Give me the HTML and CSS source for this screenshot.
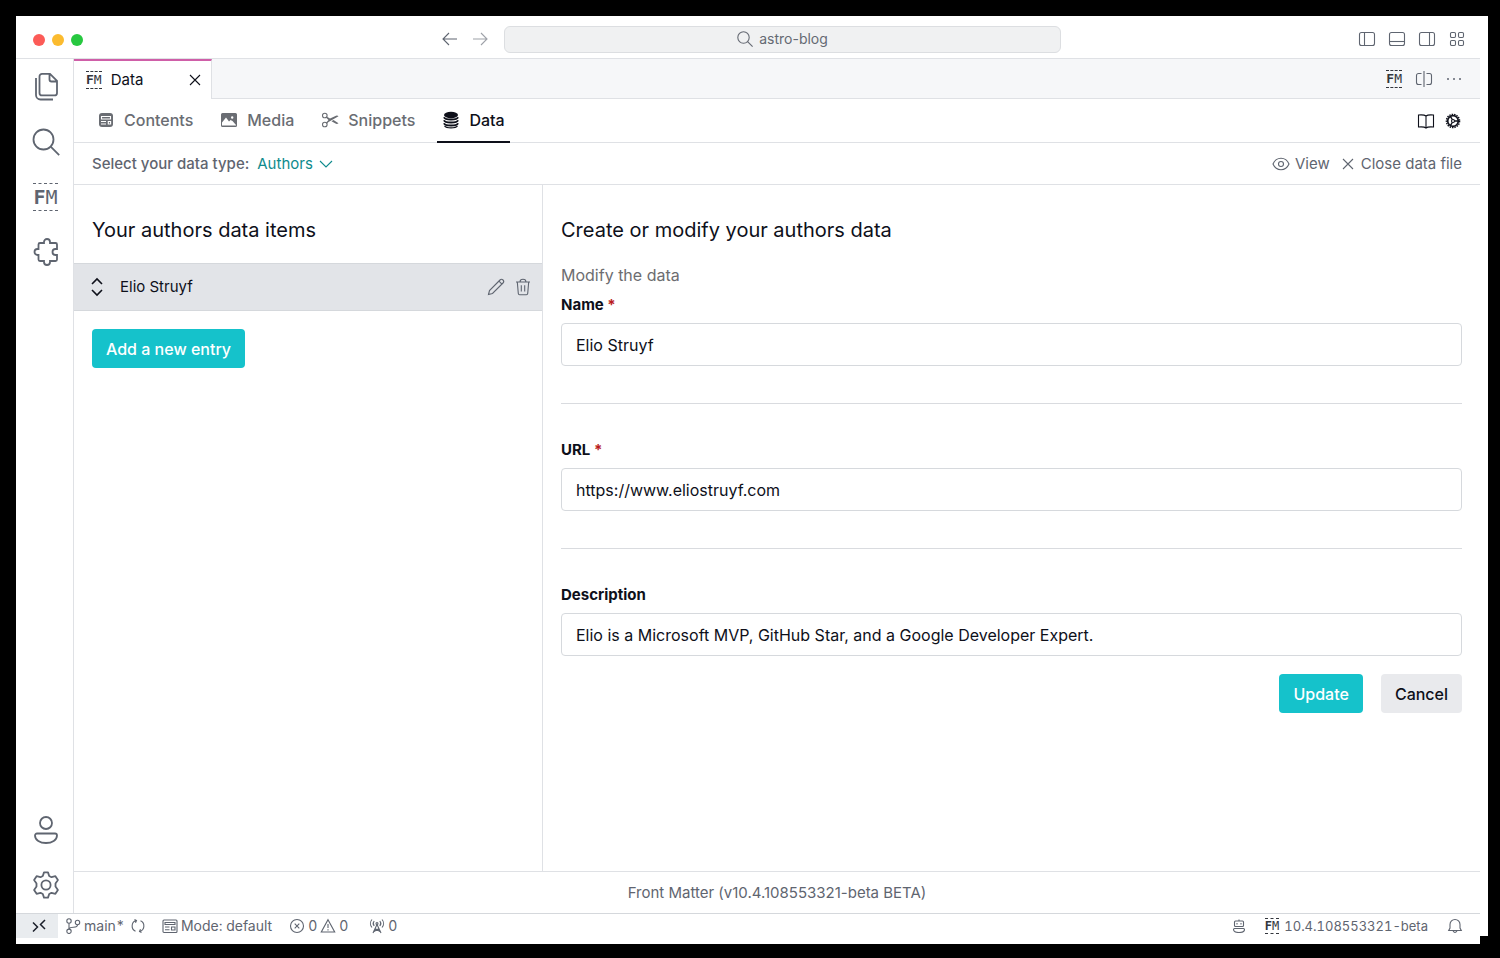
FILE: index.html
```html
<!DOCTYPE html>
<html lang="en">
<head>
<meta charset="utf-8">
<title>astro-blog</title>
<link rel="stylesheet" href="styles.css">
</head>
<body>
<svg class="sprite" aria-hidden="true">
  <symbol id="close" viewBox="0 0 16 16"><path d="M3 3l10 10M13 3L3 13"/></symbol>
  <symbol id="search" viewBox="0 0 16 16"><circle cx="6.5" cy="6.5" r="5.7"/><path d="M10.6 10.6l5 5"/></symbol>
  <symbol id="gear" viewBox="0 0 28 28">
    <circle cx="14" cy="14" r="4.6"/>
    <path stroke-linejoin="round" d="M12 1.400h4l1.200 3.600 2.300 1.200 3.900-1 2.500 3.900-2.400 3.400v3l2.400 3.400-2.500 3.900-3.900-1-2.300 1.200-1.200 3.600h-4l-1.200-3.600-2.300-1.200-3.900 1-2.500-3.900 2.400-3.400v-3L2.100 9.100l2.500-3.900 3.900 1 2.300-1.200z"/>
  </symbol>
</svg>

<div class="window">
  <header class="titlebar">
    <div class="lights"><span class="light red"></span><span class="light amber"></span><span class="light green"></span></div>
    <div class="command">
      <button class="icon-btn" aria-label="Back"><svg class="i16" viewBox="0 0 16 16"><path d="M15 8H1.500M7 2L1 8l6 6"/></svg></button>
      <button class="icon-btn faded" aria-label="Forward"><svg class="i16" viewBox="0 0 16 16"><path d="M1 8h13.500M9 2l6 6-6 6"/></svg></button>
      <button class="omnibox"><svg class="i16"><use href="#search"/></svg>astro-blog</button>
    </div>
    <div class="layouts">
      <button class="icon-btn" aria-label="Toggle primary side bar"><svg class="i18" viewBox="0 0 18 18"><rect x="1.500" y="2.500" width="15" height="13" rx="2"/><path d="M6.500 2.500v13"/></svg></button>
      <button class="icon-btn" aria-label="Toggle panel"><svg class="i18" viewBox="0 0 18 18"><rect x="1.500" y="2.500" width="15" height="13" rx="2"/><path d="M1.500 11.500h15"/></svg></button>
      <button class="icon-btn" aria-label="Toggle secondary side bar"><svg class="i18" viewBox="0 0 18 18"><rect x="1.500" y="2.500" width="15" height="13" rx="2"/><path d="M11.500 2.500v13"/></svg></button>
      <button class="icon-btn" aria-label="Customize layout"><svg class="i18" viewBox="0 0 18 18"><rect x="2.500" y="2.500" width="5" height="5" rx="1.200"/><rect x="10.500" y="2.500" width="5" height="5" rx="1.200"/><rect x="2.500" y="10.500" width="5" height="5" rx="1.200"/><rect x="10.500" y="10.500" width="5" height="5" rx="1.200"/></svg></button>
    </div>
  </header>

  <div class="workbench">
    <nav class="activity" aria-label="Activity bar">
      <button class="icon-btn" aria-label="Explorer"><svg class="i28" viewBox="-2 0 28 28"><path d="M8 .900h8l7 7v12a2.500 2.500 0 0 1-2.500 2.500H8a2.500 2.500 0 0 1-2.500-2.500V3.400A2.500 2.500 0 0 1 8 .900zM15.500 1v5.500a2 2 0 0 0 2 2H23M2 5v17a4.500 4.500 0 0 0 4.500 4.500H19"/></svg></button>
      <button class="icon-btn" aria-label="Search"><svg class="i28" viewBox="0 0 28 28"><circle cx="11.500" cy="11.500" r="10"/><path d="M18.700 18.700l8.500 8.500"/></svg></button>
      <button class="icon-btn" aria-label="Front Matter"><span class="fm fm-lg"><b>F</b>M</span></button>
      <button class="icon-btn" aria-label="Extensions"><svg class="i28" viewBox="-1 0 28 28"><path d="M7 5h4V4a3 3 0 0 1 6 0v1h5.500A1.500 1.500 0 0 1 24 6.500V11h-1.500a3 3 0 0 0 0 6H24v4.500a1.500 1.500 0 0 1-1.500 1.500H17v1a3 3 0 0 1-6 0v-1H7a1.500 1.500 0 0 1-1.500-1.500V17h-1a3 3 0 0 1 0-6h1V6.500A1.500 1.500 0 0 1 7 5z"/></svg></button>
      <button class="icon-btn account" aria-label="Accounts"><svg class="i28" viewBox="0 0 28 28"><circle cx="14" cy="7" r="6"/><path d="M5 17.500h18a2 2 0 0 1 2 2c0 4.500-5 7.500-11 7.500s-11-3-11-7.500a2 2 0 0 1 2-2z"/></svg></button>
      <button class="icon-btn" aria-label="Manage"><svg class="i28"><use href="#gear"/></svg></button>
    </nav>

    <div class="editor">
      <div class="tabs">
        <div class="tab"><span class="fm fm-sm"><b>F</b>M</span><span class="tab-title">Data</span><button class="icon-btn dark" aria-label="Close tab"><svg class="i16"><use href="#close"/></svg></button></div>
        <div class="tab-actions">
          <button class="icon-btn" aria-label="Open Front Matter"><span class="fm fm-sm"><b>F</b>M</span></button>
          <button class="icon-btn" aria-label="Split editor"><svg class="i18" viewBox="0 0 18 18"><path d="M9 1v16M6.500 3.500H3.500a2 2 0 0 0-2 2v7a2 2 0 0 0 2 2h3M11.500 3.500h3a2 2 0 0 1 2 2v7a2 2 0 0 1-2 2h-3"/></svg></button>
          <button class="icon-btn" aria-label="More actions"><svg class="i16 solid" viewBox="0 0 16 16"><circle cx="2" cy="8" r="1"/><circle cx="8" cy="8" r="1"/><circle cx="14" cy="8" r="1"/></svg></button>
        </div>
      </div>

      <div class="sections">
        <nav class="section-links">
          <a class="section" href="#contents"><svg class="i18" viewBox="-1 -1 18 18"><rect class="fill" x="1" y="1" width="14" height="14" rx="3"/><path class="knock" d="M3.500 4.500h9v2.500h-9zM3 9.500h5M3 12h5M10.300 9.500h2.300v2.500h-2.300z"/></svg>Contents</a>
          <a class="section" href="#media"><svg class="i18" viewBox="0 0 18 18"><path class="fill" d="M2.500 2h13A1.500 1.500 0 0 1 17 3.500v11a1.500 1.500 0 0 1-1.500 1.500h-13A1.500 1.500 0 0 1 1 14.500v-11A1.500 1.500 0 0 1 2.500 2z"/><path class="white" d="M2 14.500v-3L6 6.500l3 4 1.500-1.500 2 1 3.500 4v.500zM11 6.500a1.200 1.200 0 1 0 2.400 0 1.200 1.200 0 1 0-2.400 0z"/></svg>Media</a>
          <a class="section" href="#snippets"><svg class="i18" viewBox="0 0 18 18"><circle cx="3.800" cy="4.500" r="2.300"/><circle cx="3.800" cy="13.500" r="2.300"/><path class="fill" d="M5.500 5.500l3.500 2 6-2.800q1.500-.500 2.500.500L7.500 11l-1.700 1.800-.8-1L7.500 9 5 6.600zM10.500 10.300l2-1.200 5 3.200q-1.500 1-3 .300z"/></svg>Snippets</a>
          <a class="section active" href="#data"><svg class="i18" viewBox="0 0 18 18"><ellipse class="fill" cx="9" cy="4" rx="7" ry="3.200"/><path d="M2 6.300c1 3 13 3 14 0M2 9.300c1 3 13 3 14 0M2 12.300c1 3 13 3 14 0" stroke-width="1.900"/><path d="M2.500 14.800c2 2.700 11 2.700 13 0"/></svg>Data</a>
        </nav>
        <div class="section-tools">
          <button class="icon-btn dark" aria-label="Documentation"><svg class="i18" viewBox="0 0 18 18"><path d="M9 4c-1.500-1.300-4-1.300-7.500-1v12c3.500-.300 6-.300 7.500 1 1.500-1.300 4-1.300 7.500-1V3c-3.500-.300-6-.300-7.500 1zM9 4v12"/></svg></button>
          <button class="icon-btn dark" aria-label="Settings"><svg class="i18" viewBox="0 0 18 18"><circle cx="9" cy="9" r="6.600" stroke-width="1.400" stroke-dasharray="1.500 .960"/><circle cx="9" cy="9" r="5.300" stroke-width="1.700"/><circle cx="9" cy="9" r="1.500"/><path d="M10.500 9H14M8.300 7.500L6.500 4.600M8.300 10.500l-1.800 2.900" stroke-width="1.400"/></svg></button>
        </div>
      </div>

      <div class="toolbar">
        <label class="toolbar-label" for="data-type">Select your data type:</label>
        <select class="type-select" id="data-type"><option>Authors</option></select>
        <svg class="i14 teal" viewBox="0 0 14 14"><path d="M1 4l6 6 6-6"/></svg>
        <div class="toolbar-actions">
          <button class="text-btn"><svg class="i18" viewBox="0 0 18 18"><path d="M1 9c1.500-3.500 4.500-5.700 8-5.700s6.500 2.200 8 5.700c-1.500 3.500-4.500 5.700-8 5.700S2.500 12.500 1 9z"/><circle cx="9" cy="9" r="2.500"/></svg>View</button>
          <button class="text-btn"><svg class="i16"><use href="#close"/></svg>Close data file</button>
        </div>
      </div>

      <div class="panes">
        <aside class="items">
          <h2 class="heading">Your authors data items</h2>
          <ul class="list">
            <li class="item">
              <svg class="grip" viewBox="0 0 16 20"><path d="M3 7l5-5 5 5M3 13l5 5 5-5"/></svg>
              <span class="item-name">Elio Struyf</span>
              <button class="icon-btn" aria-label="Edit"><svg class="i18" viewBox="0 0 18 18"><path d="M1.500 16.500l1-4L13 2a1.900 1.900 0 0 1 3 3L5.500 15.500zM12 3.200l2.900 2.900"/></svg></button>
              <button class="icon-btn" aria-label="Delete"><svg class="i18" viewBox="0 0 18 18"><path d="M2 4h14M3.300 4l1 11.500a1.300 1.300 0 0 0 1.300 1.200h6.800a1.300 1.300 0 0 0 1.300-1.200l1-11.500M6 4q0-2.800 3-2.800T12 4M7.300 7.200v6.200M10.700 7.200v6.200"/></svg></button>
            </li>
          </ul>
          <button class="btn primary">Add a new entry</button>
        </aside>
        <main class="detail">
          <h2 class="heading">Create or modify your authors data</h2>
          <p class="hint">Modify the data</p>
          <form class="form">
            <div class="field"><label for="name">Name <span class="req">*</span></label><input id="name" type="text" value="Elio Struyf"></div>
            <hr>
            <div class="field"><label for="url">URL <span class="req">*</span></label><input id="url" type="text" value="https://www.eliostruyf.com"></div>
            <hr>
            <div class="field"><label for="description">Description</label><input id="description" type="text" value="Elio is a Microsoft MVP, GitHub Star, and a Google Developer Expert."></div>
            <div class="form-actions"><button type="button" class="btn primary">Update</button><button type="button" class="btn secondary">Cancel</button></div>
          </form>
        </main>
      </div>
      <footer class="version">Front Matter (v10.4.108553321-beta BETA)</footer>
    </div>
  </div>

  <footer class="statusbar">
    <button class="remote" aria-label="Remote"><svg class="i16" viewBox="0 0 16 16"><path d="M2 4.500L6.500 9 2 13.500M14 2L9.500 6.500 14 11"/></svg></button>
    <button class="status"><svg class="i16" viewBox="0 0 16 16"><circle cx="4" cy="3" r="2.200"/><circle cx="12.500" cy="4.500" r="2.200"/><circle cx="4" cy="13.300" r="2.200"/><path d="M4 5.200v5.900M12.500 6.700c0 2.300-1.500 2.500-4 2.500S4.500 9.800 4 11"/></svg>main*</button>
    <button class="status sync" aria-label="Synchronize"><svg class="i16" viewBox="0 0 16 16"><path d="M5.500 13.200A5.700 5.700 0 0 1 6 2.600M10.500 2.800A5.700 5.700 0 0 1 10 13.400M4.500 1.500l2 1-1 2.300M11.500 14.500l-2-1 1-2.300"/></svg></button>
    <button class="status mode"><svg class="i16" viewBox="0 0 16 16"><rect x="1" y="2" width="14" height="12.500" rx="1"/><path d="M3 4.500h10v2H3zM3 9h4.500M3 11.800h4.500M9.500 9H13v3H9.500z"/></svg>Mode: default</button>
    <button class="status problems"><svg class="i16" viewBox="0 0 16 16"><circle cx="8" cy="8" r="6.500"/><path d="M5.700 5.700l4.600 4.600M10.300 5.700l-4.600 4.600"/></svg>0<svg class="i16" viewBox="0 0 16 16"><path d="M8 1.700L14.700 14H1.300zM8 6v4M8 11.300v1.200"/></svg>0</button>
    <button class="status ports"><svg class="i16" viewBox="0 0 16 16"><path d="M8 6.500L4 15M8 6.500L12 15M5.700 11.500h4.600M5 13.500l5-3M11 13.500l-5-3M3 1.500a6 6 0 0 0 0 8M13 1.500a6 6 0 0 1 0 8M5.200 3a3.800 3.800 0 0 0 0 5M10.800 3a3.800 3.800 0 0 1 0 5"/><circle cx="8" cy="5.500" r="1"/></svg>0</button>
    <div class="status-right">
      <button class="status" aria-label="Copilot"><svg class="i14" viewBox="0 0 14 14"><rect x="2.500" y="2" width="9" height="5.500" rx="1"/><path d="M7 .500V2M5 4v1.500M9 4v1.500M2.500 9.500h9a1 1 0 0 1 1 1c0 2-2 3-5.500 3s-5.500-1-5.500-3a1 1 0 0 1 1-1z"/></svg></button>
      <button class="status release"><span class="fm fm-xs"><b>F</b>M</span>10.4.108553321-beta</button>
      <button class="status" aria-label="Notifications"><svg class="i16" viewBox="0 0 16 16"><path d="M8 1.500a5 5 0 0 0-5 5V10l-1.300 2.500h12.600L13 10V6.500a5 5 0 0 0-5-5zM6 12.800q2 3.400 4 0"/></svg></button>
    </div>
  </footer>
</div>
</body>
</html>
```

FILE: styles.css
```css
* { box-sizing: border-box; }
body {
  margin: 0;
  min-height: 100vh;
  padding: 16px 12px 14px 16px;
  display: flex;
  background: #000;
  color: #0e101a;
  font: 15px/24px Inter, "Liberation Sans", sans-serif;
}
button, input, select { font: inherit; color: inherit; }
button { border: 0; padding: 0; background: none; cursor: pointer; }
h2, p, ul { margin: 0; padding: 0; font-weight: 400; }
svg { flex: none; fill: none; stroke: currentColor; stroke-width: 1.1; display: block; }
.sprite { position: absolute; width: 0; height: 0; }
.i14 { width: 14px; height: 14px; }
.i16 { width: 16px; height: 16px; }
.i18 { width: 18px; height: 18px; }
.i28 { width: 28px; height: 28px; stroke-width: 1.8; }
.fill { fill: currentColor; stroke: none; }
.solid { fill: currentColor; stroke: none; }
.white { fill: #fff; stroke: none; }
.knock { stroke: #fff; }
.icon-btn { display: flex; color: #5f6570; }
.dark { color: #0e101a; }
.faded { opacity: .6; }
.teal { color: #0f8b8d; }

/* Front Matter mark: two letters between dashed rules */
.fm { border: dashed currentColor; border-width: 1px 0; color: #33363d; font-family: "DejaVu Sans Mono", monospace; }
.fm b { font-weight: 700; }
.fm-sm { font-size: 13px; line-height: 16px; }
.fm-lg { font-size: 20px; line-height: 26px; color: #5f6570; }
.fm-xs { font-size: 12px; line-height: 14px; }

.window { flex: 1; min-width: 0; display: flex; flex-direction: column; background: #fff; position: relative; }
.window::after { content: ""; position: absolute; right: 0; bottom: 0; width: 8px; height: 8px; background: #000; }

.titlebar { height: 43px; margin-right: 8px; border-bottom: 1px solid #dfe1e5; display: grid; grid-template-columns: 1fr 619px 1fr; align-items: center; padding: 4px 10px 0 17px; }
.lights { display: flex; gap: 7px; padding-top: 2px; }
.light { width: 12px; height: 12px; border-radius: 50%; }
.red { background: #fc5b57; }
.amber { background: #fbbb2f; }
.green { background: #27c840; }
.command { display: flex; align-items: center; gap: 14px; color: #656a73; }
.omnibox { flex: 1; height: 27px; margin-left: 2px; border: 1px solid #dcdee1; border-radius: 6px; background: #f0f1f2; display: flex; align-items: center; justify-content: center; gap: 6px; font-size: 14px; }
.layouts { display: flex; justify-content: flex-end; gap: 12px; padding-right: 4px; }

.workbench { flex: 1; display: flex; margin-right: 8px; }
.activity { width: 58px; padding: 14px 0 14px 2px; border-right: 1px solid #dfe1e5; display: flex; flex-direction: column; align-items: center; gap: 27px; }
.account { margin-top: auto; }
.editor { flex: 1; min-width: 0; display: flex; flex-direction: column; }

.tabs { height: 40px; display: flex; background: #f6f7f9; box-shadow: inset 0 -1px #dfe1e5; }
.tab { width: 138px; padding: 0 8px 0 12px; border-top: 2px solid #cf5fa8; border-right: 1px solid #dfe1e5; background: #fff; display: flex; align-items: center; gap: 9px; }
.tab-title { flex: 1; }
.tab-actions { margin-left: auto; padding-right: 18px; display: flex; align-items: center; gap: 13px; }

.sections { height: 44px; display: flex; border-bottom: 1px solid #dfe1e5; }
.section-links { display: flex; gap: 17px; padding-left: 18px; }
.section { height: 44px; padding: 0 5px 2px; display: flex; align-items: center; gap: 9px; color: #6a6d73; font-size: 16px; font-weight: 500; text-decoration: none; }
.active { color: #0e101a; border-bottom: 2px solid #0e101a; padding-bottom: 0; }
.section-tools { margin-left: auto; padding-right: 18px; display: flex; align-items: center; gap: 9px; }

.toolbar { height: 42px; padding: 0 18px; border-bottom: 1px solid #dfe1e5; display: flex; align-items: center; color: #5f6570; }
.toolbar-label { margin-right: 8px; font-weight: 500; }
.type-select { appearance: none; border: 0; padding: 0; margin-right: 6px; background: none; color: #0f8b8d; }
.toolbar-actions { margin-left: auto; display: flex; gap: 10px; }
.text-btn { display: flex; align-items: center; gap: 5px; }

.panes { flex: 1; display: grid; grid-template-columns: 469px 1fr; }
.items { border-right: 1px solid #dfe1e5; padding-top: 31px; }
.heading { font-size: 20px; line-height: 28px; }
.items .heading { margin: 0 18px 19px; }
.list { list-style: none; margin-bottom: 18px; }
.item { height: 48px; padding: 0 10px 0 15px; border: solid #d5d8dc; border-width: 1px 0; background: #e2e4e8; display: flex; align-items: center; gap: 9px; }
.grip { width: 16px; height: 20px; stroke-width: 1.6; }
.item-name { flex: 1; padding-left: 6px; }
.btn { height: 39px; padding: 0 14px; border-radius: 4px; font-size: 16px; font-weight: 500; }
.primary { background: #15c2cb; color: #fff; }
.secondary { background: #e9eaed; }
.items .btn { margin-left: 18px; }
.detail { padding: 31px 18px 0; }
.hint { margin: 19px 0 6px; font-size: 16px; color: #6d6d70; }
.field label { display: block; font-weight: 700; }
.req { color: #b91c1c; }
.field input { display: block; width: 100%; height: 43px; margin-top: 6px; padding: 0 14px; border: 1px solid #d6d9dd; border-radius: 4px; background: #fff; font-size: 16px; }
hr { margin: 37px 0 34px; border: 0; height: 1px; background: #d9dbdf; }
.form-actions { margin-top: 18px; display: flex; justify-content: flex-end; gap: 18px; }
.version { height: 42px; border-top: 1px solid #dfe1e5; text-align: center; line-height: 41px; color: #5f6570; }

.statusbar { height: 31px; margin-right: 8px; border-top: 1px solid #d5d8dc; display: flex; align-items: flex-start; font-size: 14px; color: #5f6570; font-variant-numeric: tabular-nums; }
.remote { width: 42px; height: 24px; padding-left: 15px; background: #e9ecef; color: #1b1f2a; display: flex; align-items: center; }
.remote svg { stroke-width: 1.5; }
.status { height: 24px; display: flex; align-items: center; gap: 3px; }
.release { gap: 5px; font-size: 13px; }
.remote + .status { margin-left: 7px; }
.sync { margin-left: 5px; }
.mode { margin-left: 16px; }
.problems { margin-left: 17px; }
.ports { margin-left: 21px; }
.status-right { margin-left: auto; padding-right: 17px; display: flex; gap: 19px; }
```
